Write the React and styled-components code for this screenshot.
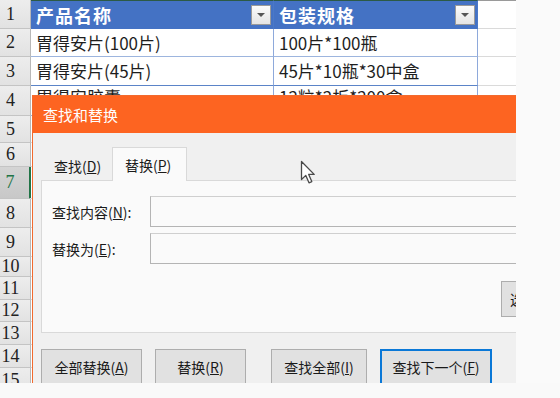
import React from 'react'
import styled, { createGlobalStyle } from 'styled-components'

const GlobalStyle = createGlobalStyle`
  body {
    margin: 0;
    font-family: "Noto Sans CJK SC", "Noto Sans", sans-serif;
  }
`

const Screen = styled.div`
  width: 560px;
  height: 398px;
  overflow: hidden;
  display: flex;
  flex-direction: column;
  background-color: #fafafa;
`

const Main = styled.div`
  height: 383px;
  display: flex;
`

const Sheet = styled.div`
  position: relative;
  width: 516px;
  height: 383px;
  overflow: hidden;
  background-color: #fff;
`

const Row = styled.div`
  display: flex;
  height: ${({ $h }) => $h}px;
`

const RowHead = styled.div`
  width: 31px;
  flex-shrink: 0;
  padding-right: 9px;
  box-sizing: border-box;
  display: flex;
  align-items: center;
  justify-content: center;
  font-family: "Liberation Serif", serif;
  font-size: 18px;
  color: ${({ $selected }) => ($selected ? '#217346' : '#222')};
  background: ${({ $selected }) =>
    $selected
      ? 'linear-gradient(#d4d4d4, #c8c8c8)'
      : 'linear-gradient(#ededed, #e2e2e2)'};
  border-bottom: 1px solid #c4c4c4;
  border-right: ${({ $selected }) =>
    $selected ? '2px solid #217346' : '1px solid #b8b8b8'};
  margin-right: ${({ $selected }) => ($selected ? '-1px' : '0')};
`

const HeadCell = styled.div`
  width: ${({ $w }) => $w}px;
  flex-shrink: 0;
  box-sizing: border-box;
  display: flex;
  align-items: center;
  justify-content: space-between;
  padding: 0 2px 0 5px;
  background-color: #4472c4;
  border-top: 1px solid #2c5a46;
  border-right: 1px solid #4a78c8;
  color: #fff;
  font-size: 18px;
  font-weight: 700;
  letter-spacing: 1px;
`

const FilterButton = styled.div`
  width: 20px;
  height: 20px;
  box-sizing: border-box;
  border: 1px solid #9a9a9a;
  background: linear-gradient(#fbfbfb, #e4e4e4);
  display: flex;
  align-items: center;
  justify-content: center;

  &::after {
    content: '';
    border-left: 4px solid transparent;
    border-right: 4px solid transparent;
    border-top: 4px solid #555;
  }
`

const Cell = styled.div`
  width: ${({ $w }) => $w}px;
  flex-shrink: 0;
  box-sizing: border-box;
  display: flex;
  align-items: ${({ $top }) => ($top ? 'flex-start' : 'center')};
  padding-left: 5px;
  font-size: 17px;
  line-height: 22px;
  color: #1e1e1e;
  white-space: nowrap;
  overflow: hidden;
  border-bottom: 1px solid ${({ $strong }) => ($strong ? '#5b84c8' : '#9db5de')};
  border-right: 1px solid #8ea9db;
`

const EmptyCell = styled.div`
  flex: 1;
  border-bottom: 1px solid #dadada;
  border-top: ${({ $top }) => ($top ? '1px solid #9a9a9a' : 'none')};
`

const SideFill = styled.div`
  flex: 1;
  background-color: #fafafa;
`

const BottomFill = styled.div`
  flex: 1;
  background-color: #f9f9f9;
`

const Dialog = styled.div`
  position: absolute;
  left: 32px;
  top: 95px;
  width: 574px;
  height: 310px;
  border: 1px solid #f26a2e;
  background-color: #f0f0f0;
  display: flex;
  flex-direction: column;
`

const TitleBar = styled.div`
  height: 37px;
  display: flex;
  align-items: center;
  padding-left: 10px;
  background-color: #fd6421;
  color: #fff;
  font-size: 15px;
`

const Body = styled.div`
  padding: 14px 8px 0 8px;
  display: flex;
  flex-direction: column;
`

const Tabs = styled.div`
  display: flex;
  align-items: flex-end;
  height: 33px;
`

const Tab = styled.div`
  width: ${({ $w }) => $w}px;
  height: ${({ $active }) => ($active ? '34px' : '30px')};
  box-sizing: border-box;
  display: flex;
  align-items: center;
  padding-left: 12px;
  font-size: 14px;
  color: #1a1a1a;
  position: relative;
  z-index: 1;
  margin-bottom: ${({ $active }) => ($active ? '-1px' : '0')};
  background-color: ${({ $active }) => ($active ? '#fafafa' : 'transparent')};
  border: 1px solid ${({ $active }) => ($active ? '#d9d9d9' : 'transparent')};
  border-bottom: none;
`

const Panel = styled.div`
  border: 1px solid #d9d9d9;
  background-color: #fafafa;
  padding: 15px 11px 15px 10px;
  display: flex;
  flex-direction: column;
`

const FieldGrid = styled.div`
  display: grid;
  grid-template-columns: 98px 1fr;
  row-gap: 6px;
  align-items: center;
`

const Label = styled.label`
  font-size: 14px;
  color: #1a1a1a;
`

const Field = styled.div`
  height: 31px;
  box-sizing: border-box;
  border: 1px solid #b4b4b4;
  border-top-color: #cfcfcf;
  background-color: #fafafa;
`

const OptionsRow = styled.div`
  margin-top: 17px;
  display: flex;
  justify-content: flex-end;
`

const Button = styled.div`
  width: ${({ $w }) => $w}px;
  height: 36px;
  box-sizing: border-box;
  display: flex;
  align-items: center;
  justify-content: center;
  font-size: 14px;
  color: #1a1a1a;
  white-space: nowrap;
  background-color: #e1e1e1;
  border: ${({ $default }) =>
    $default ? '2px solid #0a78d7' : '1px solid #adadad'};
`

const OptionsButton = styled(Button)`
  justify-content: flex-start;
  padding-left: 8px;
`

const ButtonRow = styled.div`
  margin-top: 16px;
  display: flex;
  gap: 25px;
`

const ButtonGroup = styled.div`
  display: flex;
  gap: 13px;
`

const Cursor = styled.svg`
  position: absolute;
  left: 300px;
  top: 160px;
  z-index: 5;
`

const rowHeights = [29, 28, 29, 30, 27, 24, 32, 29, 29, 20, 23, 22, 23, 23, 25]

const data = [
  ['胃得安片(100片)', '100片*100瓶'],
  ['胃得安片(45片)', '45片*10瓶*30中盒'],
  ['胃得安胶囊', '12粒*2板*200盒'],
]

const Key = ({ children }) => <u>{children}</u>

const App = () => {
  return (
    <Screen>
      <GlobalStyle />
      <Main>
        <Sheet>
          {rowHeights.map((h, i) => {
            const n = i + 1
            if (n === 1) {
              return (
                <Row key={n} $h={h}>
                  <RowHead>{n}</RowHead>
                  <HeadCell $w={243}>
                    产品名称
                    <FilterButton />
                  </HeadCell>
                  <HeadCell $w={204}>
                    包装规格
                    <FilterButton />
                  </HeadCell>
                  <EmptyCell $top />
                </Row>
              )
            }
            const item = data[n - 2]
            return (
              <Row key={n} $h={h}>
                <RowHead $selected={n === 7}>{n}</RowHead>
                {item && (
                  <>
                    <Cell $w={243} $strong={n === 3} $top={n === 4}>
                      {item[0]}
                    </Cell>
                    <Cell $w={204} $strong={n === 3} $top={n === 4}>
                      {item[1]}
                    </Cell>
                  </>
                )}
                <EmptyCell />
              </Row>
            )
          })}

          <Dialog>
            <TitleBar>查找和替换</TitleBar>
            <Body>
              <Tabs>
                <Tab $w={71}>
                  查找(<Key>D</Key>)
                </Tab>
                <Tab $w={75} $active>
                  替换(<Key>P</Key>)
                </Tab>
              </Tabs>
              <Panel>
                <FieldGrid>
                  <Label>
                    查找内容(<Key>N</Key>):
                  </Label>
                  <Field />
                  <Label>
                    替换为(<Key>E</Key>):
                  </Label>
                  <Field />
                </FieldGrid>
                <OptionsRow>
                  <OptionsButton $w={86}>
                    选项(<Key>T</Key>) &gt;&gt;
                  </OptionsButton>
                </OptionsRow>
              </Panel>
              <ButtonRow>
                <ButtonGroup>
                  <Button $w={101}>
                    全部替换(<Key>A</Key>)
                  </Button>
                  <Button $w={91}>
                    替换(<Key>R</Key>)
                  </Button>
                </ButtonGroup>
                <ButtonGroup>
                  <Button $w={96}>
                    查找全部(<Key>I</Key>)
                  </Button>
                  <Button $w={112} $default>
                    查找下一个(<Key>F</Key>)
                  </Button>
                </ButtonGroup>
              </ButtonRow>
            </Body>
          </Dialog>

          <Cursor width="16" height="25" viewBox="0 0 16 25">
            <path
              d="M1.5 1.5 L1.5 19.5 L5.8 15.4 L9 22.8 L11.8 21.6 L8.7 14.4 L14.2 14.4 Z"
              fill="#fff"
              stroke="#4a4a4a"
              strokeWidth="1.3"
              strokeLinejoin="round"
            />
          </Cursor>
        </Sheet>
        <SideFill />
      </Main>
      <BottomFill />
    </Screen>
  )
}

export default App
